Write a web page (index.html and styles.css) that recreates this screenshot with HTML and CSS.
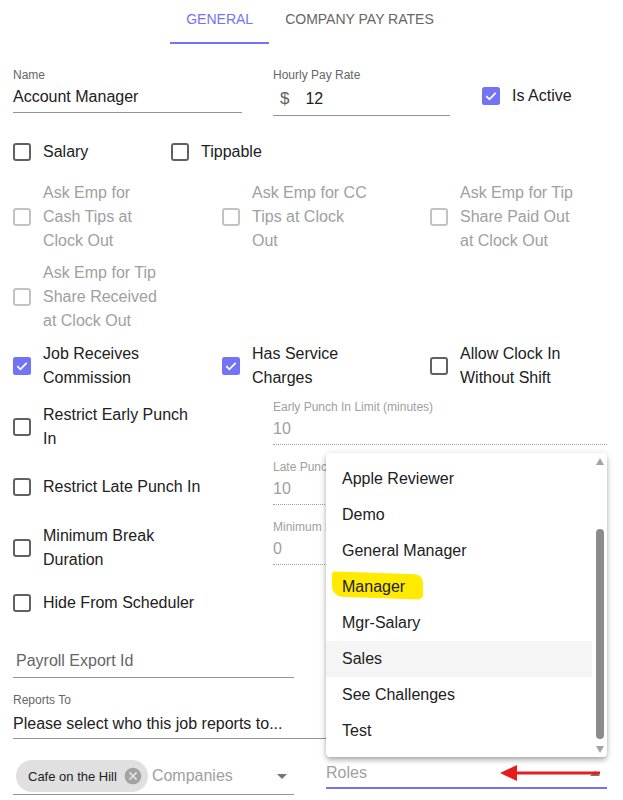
FILE: index.html
```html
<!DOCTYPE html>
<html>
<head>
<meta charset="utf-8">
<title>Job</title>
<link rel="stylesheet" href="styles.css">
</head>
<body>
<div class="page">
  <nav class="tabs">
    <div class="tab active">GENERAL</div>
    <div class="tab">COMPANY PAY RATES</div>
  </nav>

  <div class="row-top">
    <div class="field name-field">
      <div class="f-label">Name</div>
      <div class="f-value">Account Manager</div>
    </div>
    <div class="field rate-field">
      <div class="f-label">Hourly Pay Rate</div>
      <div class="f-value rate-value"><span class="prefix">$</span><span>12</span></div>
    </div>
    <div class="check active-check">
      <svg class="cb" viewBox="0 0 18 18"><rect width="18" height="18" rx="2.5" fill="#7373f6"/><path d="M4.3 9.2l3.1 3.1 6.3-6.4" fill="none" stroke="#fff" stroke-width="1.8"/></svg>
      <span class="check-text">Is Active</span>
    </div>
  </div>

  <div class="pair">
    <div class="check">
      <svg class="cb" viewBox="0 0 18 18"><rect x="1" y="1" width="16" height="16" rx="2" fill="none" stroke="#616161" stroke-width="2"/></svg>
      <span class="check-text">Salary</span>
    </div>
    <div class="check">
      <svg class="cb" viewBox="0 0 18 18"><rect x="1" y="1" width="16" height="16" rx="2" fill="none" stroke="#616161" stroke-width="2"/></svg>
      <span class="check-text">Tippable</span>
    </div>
  </div>

  <div class="opts">
    <div class="check disabled">
      <svg class="cb" viewBox="0 0 18 18"><rect x="1" y="1" width="16" height="16" rx="2" fill="none" stroke="#c2c2c2" stroke-width="2"/></svg>
      <span class="check-text">Ask Emp for<br>Cash Tips at<br>Clock Out</span>
    </div>
    <div class="check disabled">
      <svg class="cb" viewBox="0 0 18 18"><rect x="1" y="1" width="16" height="16" rx="2" fill="none" stroke="#c2c2c2" stroke-width="2"/></svg>
      <span class="check-text">Ask Emp for CC<br>Tips at Clock<br>Out</span>
    </div>
    <div class="check disabled">
      <svg class="cb" viewBox="0 0 18 18"><rect x="1" y="1" width="16" height="16" rx="2" fill="none" stroke="#c2c2c2" stroke-width="2"/></svg>
      <span class="check-text">Ask Emp for Tip<br>Share Paid Out<br>at Clock Out</span>
    </div>
    <div class="check disabled">
      <svg class="cb" viewBox="0 0 18 18"><rect x="1" y="1" width="16" height="16" rx="2" fill="none" stroke="#c2c2c2" stroke-width="2"/></svg>
      <span class="check-text">Ask Emp for Tip<br>Share Received<br>at Clock Out</span>
    </div>
    <div class="check span-row">
      <svg class="cb" viewBox="0 0 18 18"><rect width="18" height="18" rx="2.5" fill="#7373f6"/><path d="M4.3 9.2l3.1 3.1 6.3-6.4" fill="none" stroke="#fff" stroke-width="1.8"/></svg>
      <span class="check-text">Job Receives<br>Commission</span>
    </div>
    <div class="check">
      <svg class="cb" viewBox="0 0 18 18"><rect width="18" height="18" rx="2.5" fill="#7373f6"/><path d="M4.3 9.2l3.1 3.1 6.3-6.4" fill="none" stroke="#fff" stroke-width="1.8"/></svg>
      <span class="check-text">Has Service<br>Charges</span>
    </div>
    <div class="check">
      <svg class="cb" viewBox="0 0 18 18"><rect x="1" y="1" width="16" height="16" rx="2" fill="none" stroke="#616161" stroke-width="2"/></svg>
      <span class="check-text">Allow Clock In<br>Without Shift</span>
    </div>
  </div>

  <div class="frows">
    <div class="frow">
      <div class="check">
        <svg class="cb" viewBox="0 0 18 18"><rect x="1" y="1" width="16" height="16" rx="2" fill="none" stroke="#616161" stroke-width="2"/></svg>
        <span class="check-text">Restrict Early Punch<br>In</span>
      </div>
      <div class="dfield">
        <div class="d-label">Early Punch In Limit (minutes)</div>
        <div class="d-value">10</div>
      </div>
    </div>
    <div class="frow">
      <div class="check">
        <svg class="cb" viewBox="0 0 18 18"><rect x="1" y="1" width="16" height="16" rx="2" fill="none" stroke="#616161" stroke-width="2"/></svg>
        <span class="check-text">Restrict Late Punch In</span>
      </div>
      <div class="dfield">
        <div class="d-label covered">Late Punch In Limit (minutes)</div>
        <div class="d-value">10</div>
      </div>
    </div>
    <div class="frow">
      <div class="check">
        <svg class="cb" viewBox="0 0 18 18"><rect x="1" y="1" width="16" height="16" rx="2" fill="none" stroke="#616161" stroke-width="2"/></svg>
        <span class="check-text">Minimum Break<br>Duration</span>
      </div>
      <div class="dfield">
        <div class="d-label covered">Minimum Break Duration (minutes)</div>
        <div class="d-value">0</div>
      </div>
    </div>
  </div>

  <div class="check hide-row">
    <svg class="cb" viewBox="0 0 18 18"><rect x="1" y="1" width="16" height="16" rx="2" fill="none" stroke="#616161" stroke-width="2"/></svg>
    <span class="check-text">Hide From Scheduler</span>
  </div>

  <div class="field payroll">
    <div class="f-value placeholder">Payroll Export Id</div>
  </div>

  <div class="field reports">
    <div class="f-label">Reports To</div>
    <div class="f-value">Please select who this job reports to...</div>
  </div>

  <div class="brow">
    <div class="companies">
      <span class="chip">Cafe on the Hill<svg class="chip-x" viewBox="0 0 24 24"><path fill="#a3a3a3" d="M12,2C17.53,2 22,6.47 22,12C22,17.53 17.53,22 12,22C6.47,22 2,17.53 2,12C2,6.47 6.47,2 12,2M15.59,7L12,10.59L8.41,7L7,8.41L10.59,12L7,15.59L8.41,17L12,13.41L15.59,17L17,15.59L13.41,12L17,8.41L15.59,7Z"/></svg></span>
      <span class="ph">Companies</span>
      <svg class="caret" viewBox="0 0 24 24"><path fill="#767676" d="M7,10L12,15L17,10H7Z"/></svg>
    </div>
    <div class="roles">
      <span class="ph">Roles</span>
      <svg class="caret" viewBox="0 0 24 24"><path fill="#767676" d="M7,15L12,10L17,15H7Z"/></svg>
    </div>
  </div>

  <div class="menu">
    <ul class="menu-list">
      <li class="item">Apple Reviewer</li>
      <li class="item">Demo</li>
      <li class="item">General Manager</li>
      <li class="item marked"><span class="mark-text">Manager</span></li>
      <li class="item">Mgr-Salary</li>
      <li class="item hover">Sales</li>
      <li class="item">See Challenges</li>
      <li class="item">Test</li>
    </ul>
    <div class="scrollbar">
      <svg class="sb-arrow" viewBox="0 0 8 7"><path fill="#a3a3a3" d="M0 7L4 0L8 7Z"/></svg>
      <div class="sb-bottom">
        <div class="sb-thumb"></div>
        <svg class="sb-arrow down" viewBox="0 0 8 7"><path fill="#a3a3a3" d="M0 0L8 0L4 7Z"/></svg>
      </div>
    </div>
  </div>

  <svg class="red-arrow" viewBox="0 0 105 20"><path d="M16 10H102" stroke="#e41e1e" stroke-width="3.2"/><path d="M2 10L19 2V18Z" fill="#e41e1e"/></svg>
</div>
</body>
</html>
```

FILE: styles.css
```css
* { box-sizing: border-box; margin: 0; padding: 0; }

body {
  margin: 0;
  width: 623px;
  height: 800px;
  overflow: hidden;
  background: #fff;
  color: #212121;
  font-family: "Liberation Sans", Arial, sans-serif;
}

.page {
  position: relative;
  padding: 0 16px 0 13px;
}

/* Tabs */
.tabs {
  display: flex;
  justify-content: center;
  height: 44px;
}
.tab {
  height: 44px;
  padding: 0 16px;
  line-height: 38px;
  font-size: 14px;
  color: #666;
  border-bottom: 2px solid transparent;
}
.tab.active {
  color: #7373f6;
  border-bottom-color: #7373f6;
}

/* Text fields */
.f-label {
  font-size: 12px;
  line-height: 16px;
  color: #666;
}
.f-value {
  font-size: 16px;
  line-height: 24px;
  margin-top: 3px;
  padding-bottom: 3px;
  border-bottom: 1px solid #949494;
  white-space: nowrap;
}

.row-top {
  display: flex;
  margin-top: 23px;
}
.name-field { width: 229px; }
.name-field .f-value {
  margin-top: 2px;
  padding-bottom: 3px;
}
.rate-field { width: 177px; margin-left: 31px; }
.rate-value {
  display: flex;
  margin-top: 4px;
  padding-bottom: 4px;
  padding-left: 7px;
}
.prefix {
  color: #616161;
  margin-right: 16px;
  font-size: 17px;
}
.active-check {
  margin-left: 32px;
  margin-top: 17px;
  align-self: flex-start;
}

/* Checkboxes */
.check {
  display: flex;
  align-items: center;
  gap: 12px;
  font-size: 16px;
  line-height: 24px;
}
.cb {
  width: 18px;
  height: 18px;
  flex: none;
}
.check-text { white-space: nowrap; }
.disabled .check-text { color: #a0a0a0; }

.pair {
  display: grid;
  grid-template-columns: 158px auto;
  margin-top: 24px;
}

.opts {
  display: grid;
  grid-template-columns: 209px 208px 1fr;
  row-gap: 8px;
  margin-top: 17px;
}
.span-row { grid-column: 1; margin-top: 1px; }

/* Rows with disabled fields */
.frows { margin-top: 9px; }
.frow {
  display: flex;
  height: 60px;
}
.frow .check {
  width: 260px;
  align-self: center;
  margin-bottom: 4px;
}
.frow:last-child .check { margin-bottom: 2px; }
.dfield {
  width: 334px;
  align-self: flex-start;
  white-space: nowrap;
}
.d-label {
  font-size: 12px;
  line-height: 16px;
  color: #a0a0a0;
}
.d-label.covered {
  width: 53px;
  overflow: hidden;
}
.d-value {
  margin-top: 2px;
  font-size: 16px;
  line-height: 24px;
  padding-bottom: 3px;
  color: #a0a0a0;
  border-bottom: 1px dotted #a0a0a0;
}

.hide-row { margin-top: 12px; }

.payroll {
  width: 281px;
  margin-top: 34px;
}
.payroll .f-value {
  margin-top: 0;
  padding-bottom: 4px;
  padding-left: 3px;
}
.placeholder { color: #666; }

.reports { margin-top: 14px; }
.reports .f-value {
  margin-top: 4px;
  padding-bottom: 2px;
}

/* Bottom row */
.brow {
  display: flex;
  margin-top: 21px;
}
.companies {
  width: 281px;
  display: flex;
  align-items: center;
  padding-left: 3px;
  padding-bottom: 2px;
  border-bottom: 1px solid #949494;
}
.chip {
  display: inline-flex;
  align-items: center;
  height: 32px;
  padding: 0 5px 0 12px;
  border-radius: 16px;
  background: #e0e0e0;
  font-size: 13px;
  color: #212121;
  white-space: nowrap;
}
.chip-x {
  width: 20px;
  height: 20px;
  margin-left: 6px;
}
.ph {
  font-size: 16px;
  line-height: 24px;
  color: #a0a0a0;
}
.companies .ph { margin-left: 4px; }
.caret {
  width: 24px;
  height: 24px;
  margin-left: auto;
}
.roles {
  width: 281px;
  margin-left: 32px;
  display: flex;
  align-items: flex-start;
  height: 29px;
  padding-top: 1px;
  padding-bottom: 3px;
  border-bottom: 2px solid #7373f6;
}

/* Dropdown menu */
.menu {
  position: absolute;
  left: 326px;
  top: 453px;
  width: 281px;
  height: 304px;
  display: flex;
  background: #fff;
  border-radius: 4px;
  box-shadow: 0 2px 4px -1px rgba(0,0,0,.2), 0 4px 5px 0 rgba(0,0,0,.14), 0 1px 10px 0 rgba(0,0,0,.12);
  z-index: 5;
  overflow: hidden;
}
.menu-list {
  list-style: none;
  flex: 1;
  padding: 8px 0 8px;
}
.item {
  position: relative;
  z-index: 0;
  height: 36px;
  line-height: 36px;
  padding-left: 16px;
  font-size: 16px;
  color: #212121;
}
.item.hover { background: #f5f5f5; }
.marked::before {
  content: "";
  position: absolute;
  left: 6px;
  top: 4px;
  width: 91px;
  height: 25px;
  background: #ffea00;
  border-radius: 3px 8px 5px 10px;
  transform: skewY(2deg);
  z-index: -1;
}
.scrollbar {
  width: 15px;
  flex: none;
  display: flex;
  flex-direction: column;
  align-items: center;
  padding: 5px 0 4px;
}
.sb-arrow {
  width: 8px;
  height: 7px;
  flex: none;
}
.sb-bottom {
  margin-top: auto;
  display: flex;
  flex-direction: column;
  align-items: center;
}
.sb-thumb {
  width: 8px;
  height: 210px;
  border-radius: 4px;
  background: #8c8c8c;
}
.sb-arrow.down { margin-top: 7px; }

.red-arrow {
  position: absolute;
  left: 498px;
  top: 763px;
  width: 105px;
  height: 20px;
  z-index: 6;
}
```
